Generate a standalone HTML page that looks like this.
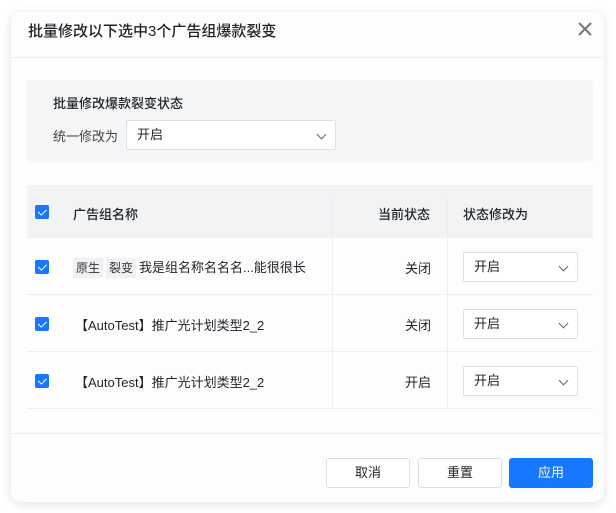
<!DOCTYPE html>
<html><head><meta charset="utf-8"><style>
*{box-sizing:border-box;margin:0;padding:0}
body{width:616px;height:513px;background:#fff;font-family:"Liberation Sans","Noto Sans CJK SC",sans-serif;position:relative;overflow:hidden;color:#1f2329}
.dlg{position:absolute;left:11px;top:12px;width:593px;height:490px;background:#fdfdfd;border-radius:10px;box-shadow:0 2px 10px rgba(0,0,0,.12)}
.title{position:absolute;left:17px;top:8px;font-size:15px;font-weight:500;color:#1f2329}
.x{position:absolute;left:565px;top:8px;width:18px;height:18px}
.hl{position:absolute;left:0;right:0;top:45px;border-top:1px solid #ebedf0}
.panel{position:absolute;left:16px;top:68px;width:566px;height:82px;background:#f5f6f8;border-radius:3px}
.sel{position:absolute;background:#fff;border:1px solid #dcdfe4;border-radius:2px;font-size:13px;padding-left:10px;line-height:28px}
.chev{position:absolute;right:10px;top:10px;width:7px;height:7px;border-right:1px solid #666;border-bottom:1px solid #666;transform:rotate(45deg)}
.cb{position:absolute;width:14px;height:14px;background:#1677ff;border-radius:2px}
.cb:after{content:"";position:absolute;left:4.5px;top:1.5px;width:3.5px;height:7px;border-right:1.6px solid #fff;border-bottom:1.6px solid #fff;transform:rotate(45deg)}
.t{position:absolute;font-size:13px;white-space:nowrap}
.row{position:absolute;left:16px;width:566px;border-bottom:1px solid #ebedf0}
.tag{display:inline-block;background:#eef0f3;font-size:12px;padding:0 3px;line-height:20px;margin-right:3px;color:#333}
.btn{position:absolute;top:446px;width:84px;height:30px;border:1px solid #dcdfe4;border-radius:3px;background:#fff;font-size:13px;text-align:center;line-height:28px}
</style></head><body>
<div class="dlg">
<div class="title">批量修改以下选中3个广告组爆款裂变</div>
<svg class="x" viewBox="0 0 18 18"><path d="M3 3L15 15M15 3L3 15" stroke="#777" stroke-width="2"/></svg>
<div class="hl"></div>
<div class="panel">
<div class="t" style="left:26px;top:13px;font-weight:500">批量修改爆款裂变状态</div>
<div class="t" style="left:26px;top:46px;color:#444">统一修改为</div>
<div class="sel" style="left:99px;top:40px;width:210px;height:30px">开启<div class="chev"></div></div>
</div>
<div style="position:absolute;left:16px;top:173px;width:566px;height:53px;background:#f2f3f5;border-bottom:1px solid #ebedf0"></div>
<div class="cb" style="left:24px;top:193px"></div>
<div class="t" style="left:62px;top:192px;font-weight:500">广告组名称</div>
<div class="t" style="left:367px;top:192px;font-weight:500">当前状态</div>
<div class="t" style="left:452px;top:192px;font-weight:500">状态修改为</div>
<div style="position:absolute;left:321px;top:187px;height:210px;border-left:1px solid #ebedf0"></div>
<div style="position:absolute;left:436px;top:187px;height:210px;border-left:1px solid #ebedf0"></div>
<div class="row" style="top:226px;height:57px"></div>
<div class="row" style="top:283px;height:57px"></div>
<div class="row" style="top:340px;height:57px"></div>
<div class="cb" style="left:24px;top:248px"></div>
<div class="t" style="left:62px;top:245px"><span class="tag">原生</span><span class="tag">裂变</span>我是组名称名名名...能很很长</div>
<div class="t" style="left:394px;top:246px">关闭</div>
<div class="sel" style="left:452px;top:240px;width:115px;height:30px">开启<div class="chev"></div></div>
<div class="cb" style="left:24px;top:305px"></div>
<div class="t" style="left:64px;top:303px">【AutoTest】推广光计划类型2_2</div>
<div class="t" style="left:394px;top:303px">关闭</div>
<div class="sel" style="left:452px;top:297px;width:115px;height:30px">开启<div class="chev"></div></div>
<div class="cb" style="left:24px;top:362px"></div>
<div class="t" style="left:64px;top:360px">【AutoTest】推广光计划类型2_2</div>
<div class="t" style="left:394px;top:360px">开启</div>
<div class="sel" style="left:452px;top:354px;width:115px;height:30px">开启<div class="chev"></div></div>
<div style="position:absolute;left:0;right:0;top:421px;border-top:1px solid #ebedf0"></div>
<div class="btn" style="left:315px">取消</div>
<div class="btn" style="left:407px">重置</div>
<div class="btn" style="left:498px;background:#1677ff;border-color:#1677ff;color:#fff">应用</div>
</div>
</body></html>
